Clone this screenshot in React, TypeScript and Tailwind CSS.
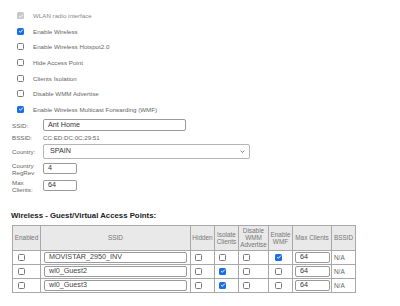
import React from 'react';

type BoxProps = { checked?: boolean; disabled?: boolean };

const Box = ({ checked = false, disabled = false }: BoxProps) => {
  if (checked) {
    return (
      <span
        className={`inline-flex items-center justify-center w-[7px] h-[7px] rounded-[1.5px] shrink-0 ${
          disabled ? 'bg-[#c8c8c8]' : 'bg-[#1a6fe3]'
        }`}
      >
        <svg viewBox="0 0 8 8" className="w-[6px] h-[6px]">
          <path d="M1.6 4.2 L3.2 5.7 L6.4 2.2" fill="none" stroke="white" strokeWidth="1.3" />
        </svg>
      </span>
    );
  }
  return <span className="inline-block w-[7px] h-[7px] rounded-[1.5px] border border-[#7a7a7a] bg-white shrink-0" />;
};

const options = [
  { label: 'WLAN radio interface', checked: true, disabled: true },
  { label: 'Enable Wireless', checked: true },
  { label: 'Enable Wireless Hotspot2.0' },
  { label: 'Hide Access Point' },
  { label: 'Clients Isolation' },
  { label: 'Disable WMM Advertise' },
  { label: 'Enable Wireless Multicast Forwarding (WMF)', checked: true },
];

const guests = [
  { ssid: 'MOVISTAR_2950_INV', isolate: false, wmf: true },
  { ssid: 'wl0_Guest2', isolate: true, wmf: false },
  { ssid: 'wl0_Guest3', isolate: true, wmf: false },
];

const Field = ({ value, className }: { value: string; className: string }) => (
  <div className={`flex items-center border border-[#9a9a9a] rounded-[2px] bg-white pl-[4px] text-[7.2px] text-[#333] ${className}`}>
    {value}
  </div>
);

export default function App() {
  return (
    <div className="w-[400px] h-[306px] bg-white overflow-hidden font-['Liberation_Sans',Arial,sans-serif] text-[#666]">
      <div className="flex flex-col pt-[8px] pl-[17px]">
        {options.map((o) => (
          <div key={o.label} className="flex items-center h-[15.6px] text-[6.2px]">
            <Box checked={o.checked} disabled={o.disabled} />
            <span className={`ml-[9px] ${o.disabled ? 'text-[#888]' : ''}`}>{o.label}</span>
          </div>
        ))}
      </div>

      <div className="flex flex-col pl-[12px] text-[6.2px] mt-[1px]">
        <div className="flex items-center h-[14px]">
          <span className="w-[31px]">SSID:</span>
          <Field value="Ant Home" className="w-[143px] h-[12px]" />
        </div>
        <div className="flex items-center h-[10px]">
          <span className="w-[31px]">BSSID:</span>
          <span>CC:ED:DC:0C:29:51</span>
        </div>
        <div className="flex items-center h-[18px]">
          <span className="w-[31px]">Country:</span>
          <div className="flex items-center justify-between w-[207px] h-[15px] border border-[#b5b5b5] rounded-[2px] pl-[6px] pr-[4px] text-[7.2px] text-[#333]">
            <span>SPAIN</span>
            <svg viewBox="0 0 8 8" className="w-[5px] h-[5px]">
              <path d="M1 2.5 L4 5.5 L7 2.5" fill="none" stroke="#555" strokeWidth="1.2" />
            </svg>
          </div>
        </div>
        <div className="flex items-center h-[17px]">
          <span className="w-[31px] leading-[7px]">Country<br />RegRev</span>
          <Field value="4" className="w-[34px] h-[11px]" />
        </div>
        <div className="flex items-center h-[17px]">
          <span className="w-[31px] leading-[7px]">Max<br />Clients:</span>
          <Field value="64" className="w-[34px] h-[11px]" />
        </div>
      </div>

      <div className="pl-[11px] mt-[16px] text-[7.8px] font-bold text-[#222]">
        Wireless - Guest/Virtual Access Points:
      </div>

      <table className="ml-[12px] mt-[3px] border-collapse table-fixed text-[6.4px] text-[#777]">
        <colgroup>
          <col className="w-[28px]" />
          <col className="w-[149px]" />
          <col className="w-[24px]" />
          <col className="w-[24px]" />
          <col className="w-[30px]" />
          <col className="w-[24px]" />
          <col className="w-[39px]" />
          <col className="w-[24px]" />
        </colgroup>
        <thead>
          <tr className="h-[25px] bg-[#e9e9e9] leading-[7px]">
            <th className="border border-[#a8a8a8] font-normal">Enabled</th>
            <th className="border border-[#a8a8a8] font-normal">SSID</th>
            <th className="border border-[#a8a8a8] font-normal">Hidden</th>
            <th className="border border-[#a8a8a8] font-normal">Isolate<br />Clients</th>
            <th className="border border-[#a8a8a8] font-normal">Disable<br />WMM<br />Advertise</th>
            <th className="border border-[#a8a8a8] font-normal">Enable<br />WMF</th>
            <th className="border border-[#a8a8a8] font-normal">Max Clients</th>
            <th className="border border-[#a8a8a8] font-normal">BSSID</th>
          </tr>
        </thead>
        <tbody>
          {guests.map((g) => (
            <tr key={g.ssid} className="h-[14px]">
              <td className="border border-[#a8a8a8] pl-[5px] align-middle">
                <div className="flex"><Box /></div>
              </td>
              <td className="border border-[#a8a8a8] px-[3px]">
                <Field value={g.ssid} className="w-[143px] h-[11px] text-[#444]" />
              </td>
              <td className="border border-[#a8a8a8] pl-[4px]">
                <div className="flex"><Box /></div>
              </td>
              <td className="border border-[#a8a8a8] pl-[4px]">
                <div className="flex"><Box checked={g.isolate} /></div>
              </td>
              <td className="border border-[#a8a8a8] pl-[4px]">
                <div className="flex"><Box /></div>
              </td>
              <td className="border border-[#a8a8a8] pl-[6px]">
                <div className="flex"><Box checked={g.wmf} /></div>
              </td>
              <td className="border border-[#a8a8a8] pl-[2px]">
                <Field value="64" className="w-[35px] h-[11px]" />
              </td>
              <td className="border border-[#a8a8a8] pl-[2px] text-[#666]">N/A</td>
            </tr>
          ))}
        </tbody>
      </table>
    </div>
  );
}
